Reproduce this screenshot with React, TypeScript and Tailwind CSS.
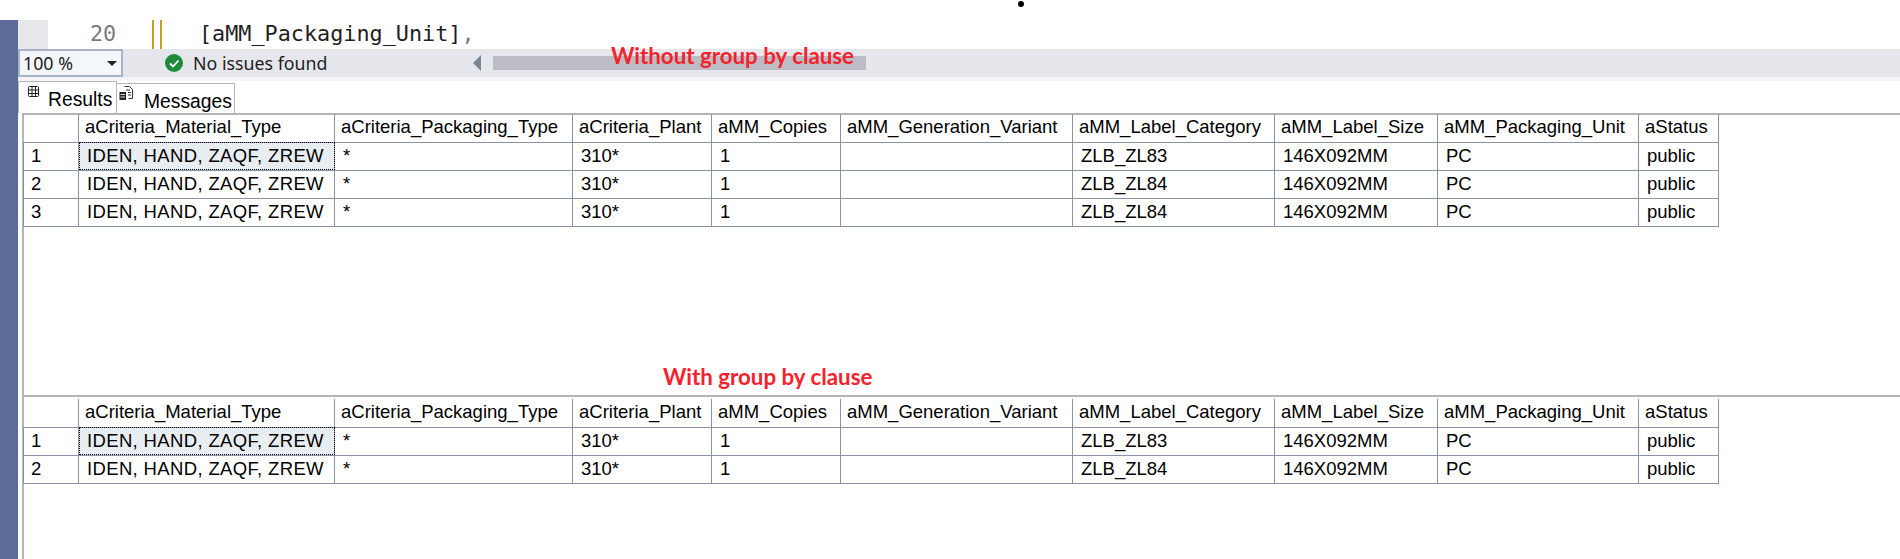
import { clsx } from "clsx";

const COLUMNS = [
  { name: "aCriteria_Material_Type", width: 256 },
  { name: "aCriteria_Packaging_Type", width: 238 },
  { name: "aCriteria_Plant", width: 139 },
  { name: "aMM_Copies", width: 129 },
  { name: "aMM_Generation_Variant", width: 232 },
  { name: "aMM_Label_Category", width: 202 },
  { name: "aMM_Label_Size", width: 163 },
  { name: "aMM_Packaging_Unit", width: 201 },
  { name: "aStatus", width: 80 },
];

const row = (category: string) => [
  "IDEN, HAND, ZAQF, ZREW",
  "*",
  "310*",
  "1",
  "",
  category,
  "146X092MM",
  "PC",
  "public",
];

const WITHOUT_GROUP = [row("ZLB_ZL83"), row("ZLB_ZL84"), row("ZLB_ZL84")];
const WITH_GROUP = [row("ZLB_ZL83"), row("ZLB_ZL84")];

function ResultGrid({ rows, className }: { rows: string[][]; className?: string }) {
  return (
    <table className={clsx("-ml-px table-fixed border-collapse w-[1695px] text-[18.500px] leading-[25px] text-black", className)}>
      <colgroup>
        <col className="w-[55px]" />
        {COLUMNS.map((col) => (
          <col key={col.name} style={{ width: col.width }} />
        ))}
      </colgroup>
      <thead>
        <tr className="h-[28px]">
          <th className="border-t-0 border-l-0 border-b border-r border-[#8a94a8]" />
          {COLUMNS.map((col) => (
            <th
              key={col.name}
              className="border-b border-r border-[#8a94a8] pl-[6px] pb-[2px] text-left font-normal whitespace-nowrap overflow-hidden"
            >
              {col.name}
            </th>
          ))}
        </tr>
      </thead>
      <tbody>
        {rows.map((cells, i) => (
          <tr key={i} className="h-[28px]">
            <td className="border border-[#8a94a8] pl-[7px] pb-[2px]">{i + 1}</td>
            {cells.map((cell, j) => (
              <td
                key={j}
                className={clsx(
                  "border border-[#8a94a8] pl-[8px] pb-[2px] whitespace-nowrap",
                  j === 0 && "tracking-[0.35px]",
                  i === 0 && j === 0 && "bg-[#e8edf1] outline-1 outline-dotted outline-black -outline-offset-1",
                )}
              >
                {cell}
              </td>
            ))}
          </tr>
        ))}
      </tbody>
    </table>
  );
}

function GridIcon() {
  return (
    <svg width="13" height="13" viewBox="0 0 13 13" fill="none" stroke="#222" strokeWidth="1">
      <rect x="1.5" y="1.5" width="10" height="10" rx="1" />
      <path d="M1.5 5h10M1.5 8.5h10M5 1.5v10M8.500 1.500v10" />
    </svg>
  );
}

function MessagesIcon() {
  return (
    <svg width="14" height="15" viewBox="0 0 14 15" fill="none">
      <path d="M5.500 0.500h5l3 3v9h-4" stroke="#333" />
      <path d="M7 4h4M9 6.500h3M9 9h3" stroke="#333" />
      <rect x="0.500" y="6" width="6.500" height="8" fill="#222" />
      <path d="M1.500 8.500h4.500M1.500 11h4.500" stroke="#ddd" />
    </svg>
  );
}

export default function App() {
  return (
    <div className="relative flex h-[559px] w-[1900px] overflow-hidden bg-white font-['Liberation_Sans',sans-serif]">
      {/* annotations pasted over the screenshot */}
      <span className="absolute left-[1018px] top-[1px] h-[6px] w-[6px] rounded-full bg-black" />
      <span className="absolute left-[611px] top-[43px] font-['Lato',sans-serif] text-[22.300px] leading-[26px] font-bold text-[#f5222d]">
        Without group by clause
      </span>
      <span className="absolute left-[663px] top-[364px] font-['Lato',sans-serif] text-[22.300px] leading-[26px] font-bold text-[#f5222d]">
        With group by clause
      </span>

      <div className="mt-[20px] w-[18px] shrink-0 bg-[#5d6b99]" />

      <div className="flex min-w-0 flex-1 flex-col">
        {/* editor line */}
        <div className="flex h-[29px] shrink-0 items-center mt-[20px]">
          <div className="h-full w-[30px] bg-[#e7e8ec]" />
          <span className="ml-[42px] w-[34px] font-['DejaVu_Sans_Mono',monospace] text-[21.800px] text-[#7a7a7a]">20</span>
          <div className="ml-[28px] h-full w-[2px] bg-[#c8a020]" />
          <div className="ml-[6px] h-full w-[2px] bg-[#c8a020]" />
          <span className="ml-[37px] font-['DejaVu_Sans_Mono',monospace] text-[21.800px] text-[#1f1f1f]">
            [aMM_Packaging_Unit]<span className="text-[#7a7a7a]">,</span>
          </span>
        </div>

        {/* status bar */}
        <div className="flex h-[28px] shrink-0 items-center bg-[#e6e7ed] font-['Noto_Sans',sans-serif] text-[17.800px] text-[#1e1e1e]">
          <div className="flex h-full w-[105px] items-center justify-between border-2 border-[#a9b3c6] bg-[#f3f6fb] pl-[3px] pr-[4px]">
            <span>100 %</span>
            <span className="h-0 w-0 border-x-[5px] border-t-[5px] border-x-transparent border-t-[#222]" />
          </div>
          <svg className="ml-[42px]" width="18" height="18" viewBox="0 0 18 18">
            <circle cx="9" cy="9" r="9" fill="#1f8a3a" />
            <path d="M5 9.500l3 3 5.500-6" fill="none" stroke="#fff" strokeWidth="1.800" />
          </svg>
          <span className="ml-[10px] w-[134px] whitespace-nowrap">No issues found</span>
          <span className="ml-[146px] h-0 w-0 border-y-[8px] border-r-[8px] border-y-transparent border-r-[#7d8494]" />
          <div className="ml-[12px] h-[14px] w-[373px] bg-[#bcbdc4]" />
        </div>
        <div className="h-[4px] shrink-0 bg-[#f5f5f8]" />

        {/* result tabs */}
        <div className="flex h-[32px] shrink-0 items-end text-[19.300px] text-black">
          <div className="flex h-[32px] w-[99px] items-start gap-[8px] border-x border-t border-[#b5b5b5] pl-[8px] pt-[3px]">
            <GridIcon />
            <span className="mt-[3px] leading-[24px]">Results</span>
          </div>
          <div className="flex h-[30px] w-[118px] items-start gap-[11px] border-r border-t border-[#b5b5b5] pl-[2px] pt-[2px]">
            <MessagesIcon />
            <span className="mt-[4px] leading-[24px]">Messages</span>
          </div>
        </div>

        {/* result panes */}
        <div className="ml-[4px] flex h-[282px] shrink-0 flex-col border-l-2 border-t-2 border-[#b5b5b5]">
          <ResultGrid rows={WITHOUT_GROUP} className="-mt-px" />
        </div>
        <div className="ml-[4px] flex min-h-0 flex-1 flex-col border-l-2 border-t-2 border-[#b5b5b5] pt-[2px]">
          <ResultGrid rows={WITH_GROUP} />
        </div>
      </div>
    </div>
  );
}
